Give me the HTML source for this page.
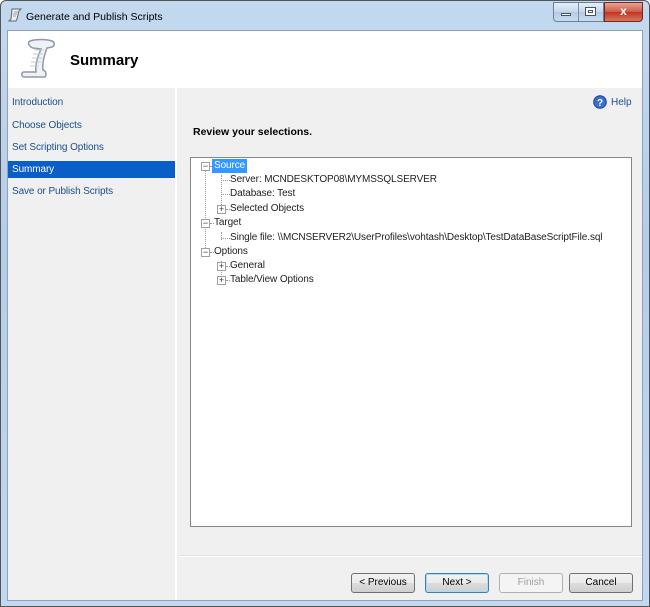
<!DOCTYPE html>
<html><head><meta charset="utf-8"><style>
*{margin:0;padding:0;box-sizing:border-box}
body{width:650px;height:607px;overflow:hidden;background:#fff;font-family:"Liberation Sans",sans-serif;font-size:10px;position:relative}
.frame{position:absolute;left:0;top:0;width:650px;height:607px;background:linear-gradient(#c3d9ef,#b4cde8 40%,#c2d8ee);border:1px solid #555;border-radius:6px 6px 0 0}
.abs{position:absolute}
.title{left:26px;top:11px;font-size:10.5px;color:#000}
.client{left:7px;top:30px;width:636px;height:571px;background:#f0f0f0;border:1px solid #8da2b8}
.hdr{left:0;top:0;width:634px;height:57px;background:#fff}
.nav{left:0;top:57px;width:169px;height:512px;background:#f0f0f0;border-right:2px solid #fff}
.nav div{position:absolute;left:4px;color:#1a4e8c;font-size:10px;letter-spacing:-0.1px}
.tree{left:182px;top:126px;width:442px;height:370px;background:#fff;border:1px solid #828790}
.t{position:absolute;font-size:10px;color:#222;white-space:nowrap;letter-spacing:-0.1px}
.pm{position:absolute;width:9px;height:9px;border:1px solid #a0a0a0;background:#fff;font-size:9px;line-height:6px;text-align:center;color:#333}
.dv{position:absolute;border-left:1px dotted #999}
.dh{position:absolute;border-top:1px dotted #999;height:0}
.btn{position:absolute;top:542px;height:20px;border:1px solid #707070;border-radius:3px;background:linear-gradient(#f2f2f2,#ebebeb 50%,#dddddd 51%,#cfcfcf);font-size:10px;text-align:center;line-height:18px;color:#000}
</style></head><body>
<div class="frame"></div>
<svg class="abs" style="left:7px;top:7px" width="16" height="16" viewBox="0 0 16 16"><path d="M5 2h9l-2 2-2 8-1 2H2l2-2z" fill="#e8eef5" stroke="#666" stroke-width="1"/><path d="M7 5h4M6 7h4M6 9h3" stroke="#889" stroke-width=".8"/></svg>
<div class="abs title">Generate and Publish Scripts</div>
<div class="abs" style="left:553px;top:2px;width:51px;height:20px;border:1px solid #6d7f96;border-radius:0 0 0 4px;background:linear-gradient(#e4eef9,#c6d6ea 50%,#b4c9e2 51%,#c9dcf1)"></div>
<div class="abs" style="left:578px;top:3px;width:1px;height:18px;background:#7b8ea6"></div>
<div class="abs" style="left:561px;top:13px;width:10px;height:3px;background:#fff;border:1px solid #45556b"></div>
<div class="abs" style="left:585px;top:7px;width:11px;height:9px;border:1px solid #45556b;background:#fff"></div>
<div class="abs" style="left:588px;top:10px;width:5px;height:3px;border:1px solid #45556b"></div>
<div class="abs" style="left:604px;top:2px;width:39px;height:20px;border:1px solid #6d2a20;border-radius:0 0 4px 0;background:linear-gradient(#e8a493,#d0594a 50%,#c03420 51%,#d8785e);color:#fff;font-weight:bold;font-size:12px;text-align:center;line-height:17px">x</div>
<div class="abs client">
 <div class="abs hdr">
  <svg class="abs" style="left:8px;top:6px" width="42" height="44" viewBox="0 0 42 44"><path d="M14 4c6-2 16-2 22 0c3 1 3 5 0 6l-5 1c-3 8-5 15-4 22c3 1 4 4 2 7H8c-3 0-3-5 0-5h12c-1-8 2-16 5-23l-8-1c-4-1-6-6-3-7z" fill="#eef1f6" stroke="#8f99a8" stroke-width="1.5"/><path d="M18 13h10M17 17h10M16 21h10M15 25h10M14 29h9" stroke="#c4cad4" stroke-width="1"/></svg>
  <div class="abs" style="left:62px;top:21px;font-size:15px;font-weight:bold">Summary</div>
 </div>
 <div class="abs nav">
  <div style="top:9px">Introduction</div>
  <div style="top:32px">Choose Objects</div>
  <div style="top:54px">Set Scripting Options</div>
  <div style="top:73px;left:0;width:167px;height:17px;background:#0a5ec8;color:#fff;padding:3px 4px">Summary</div>
  <div style="top:98px">Save or Publish Scripts</div>
 </div>
 <svg class="abs" style="left:585px;top:64px" width="14" height="14" viewBox="0 0 14 14"><circle cx="7" cy="7" r="6.3" fill="#3b6fd0" stroke="#1f3f90"/><text x="7" y="11" font-size="10" font-weight="bold" fill="#fff" text-anchor="middle" font-family="Liberation Sans">?</text></svg>
 <div class="abs" style="left:603px;top:66px;color:#1a4e8c">Help</div>
 <div class="abs" style="left:185px;top:95px;font-weight:bold;font-size:10.5px">Review your selections.</div>
 <div class="abs tree">
  <div class="dv" style="left:14px;top:12px;height:84px"></div>
  <div class="dv" style="left:30px;top:17px;height:36px"></div>
  <div class="dv" style="left:30px;top:74px;height:8px"></div>
  <div class="dv" style="left:30px;top:103px;height:22px"></div>
  <div class="dh" style="left:19px;top:8px;width:4px"></div>
  <div class="dh" style="left:30px;top:22px;width:9px"></div>
  <div class="dh" style="left:30px;top:36px;width:9px"></div>
  <div class="dh" style="left:35px;top:51px;width:4px"></div>
  <div class="dh" style="left:19px;top:65px;width:4px"></div>
  <div class="dh" style="left:30px;top:80px;width:9px"></div>
  <div class="dh" style="left:19px;top:94px;width:4px"></div>
  <div class="dh" style="left:35px;top:108px;width:4px"></div>
  <div class="dh" style="left:35px;top:122px;width:4px"></div>
  <div class="pm" style="left:10px;top:4px">−</div>
  <div class="pm" style="left:26px;top:47px">+</div>
  <div class="pm" style="left:10px;top:61px">−</div>
  <div class="pm" style="left:10px;top:90px">−</div>
  <div class="pm" style="left:26px;top:104px">+</div>
  <div class="pm" style="left:26px;top:118px">+</div>
  <div class="t" style="left:21px;top:1px;background:#3399ff;color:#fff;padding:0 2px;height:14px;line-height:14px">Source</div>
  <div class="t" style="left:39px;top:16px">Server: MCNDESKTOP08\MYMSSQLSERVER</div>
  <div class="t" style="left:39px;top:30px">Database: Test</div>
  <div class="t" style="left:39px;top:45px">Selected Objects</div>
  <div class="t" style="left:23px;top:59px">Target</div>
  <div class="t" style="left:39px;top:74px">Single file: \\MCNSERVER2\UserProfiles\vohtash\Desktop\TestDataBaseScriptFile.sql</div>
  <div class="t" style="left:23px;top:88px">Options</div>
  <div class="t" style="left:39px;top:102px">General</div>
  <div class="t" style="left:39px;top:116px">Table/View Options</div>
 </div>
 <div class="abs" style="left:171px;top:525px;width:463px;height:1px;background:#fff"></div>
 <div class="abs" style="left:171px;top:524px;width:463px;height:1px;background:#e2e2e2"></div>
 <div class="btn" style="left:343px;width:64px">&lt; Previous</div>
 <div class="btn" style="left:417px;width:64px;border-color:#3c7fb1;box-shadow:inset 0 0 0 1px #a8dcf8">Next &gt;</div>
 <div class="btn" style="left:491px;width:64px;border-color:#adb2b5;background:#f4f4f4;color:#a0a0a0">Finish</div>
 <div class="btn" style="left:561px;width:64px">Cancel</div>
</div>
</body></html>
